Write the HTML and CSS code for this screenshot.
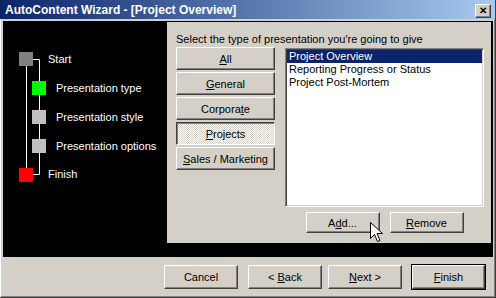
FILE: index.html
```html
<!DOCTYPE html>
<html lang="en">
<head>
  <meta charset="UTF-8" />
  <title>AutoContent Wizard - [Project Overview]</title>
  <link rel="stylesheet" href="styles.css">
</head>
<body>
  <div class="window">
    <div class="titlebar">
      <span class="title">AutoContent Wizard - [Project Overview]</span>
      <button class="close-btn">&#x2715;</button>
    </div>

    <div class="content">
      <div class="steps">
        <svg width="164" height="236" viewBox="3 21 164 236">
          <g stroke="#fff" stroke-width="1" fill="none">
            <path d="M26.5 65 V168" />
            <path d="M33 59.5 H39.5 V174.5 H33" />
          </g>
          <rect x="19" y="52" width="14" height="14" fill="#808080" />
          <rect x="32" y="81" width="14" height="14" fill="#00ff00" />
          <rect x="32" y="110" width="14" height="14" fill="#c0c0c0" />
          <rect x="32" y="139" width="14" height="14" fill="#c0c0c0" />
          <rect x="19" y="168" width="14" height="14" fill="#ff0000" />
          <g class="step-label">
            <text x="48" y="63">Start</text>
            <text x="56" y="92">Presentation type</text>
            <text x="56" y="121">Presentation style</text>
            <text x="56" y="150">Presentation options</text>
            <text x="48" y="178">Finish</text>
          </g>
        </svg>
      </div>

      <div class="main">
        <p class="prompt">Select the type of presentation you're going to give</p>
        <div class="picker">
          <div class="categories">
            <button class="btn cat-btn"><u>A</u>ll</button>
            <button class="btn cat-btn"><u>G</u>eneral</button>
            <button class="btn cat-btn">Corpora<u>t</u>e</button>
            <button class="btn cat-btn pressed"><u>P</u>rojects</button>
            <button class="btn cat-btn"><u>S</u>ales / Marketing</button>
          </div>
          <div class="list-col">
            <ul class="listbox">
              <li class="selected">Project Overview</li>
              <li>Reporting Progress or Status</li>
              <li>Project Post-Mortem</li>
            </ul>
            <div class="list-actions">
              <button class="btn small-btn">A<u>d</u>d...</button>
              <button class="btn small-btn"><u>R</u>emove</button>
            </div>
          </div>
        </div>
      </div>
    </div>

    <div class="footer">
      <button class="btn nav-btn">Cancel</button>
      <button class="btn nav-btn back-btn">&lt; <u>B</u>ack</button>
      <button class="btn nav-btn"><u>N</u>ext &gt;</button>
      <button class="btn nav-btn default"><u>F</u>inish</button>
    </div>
  </div>

  <svg class="cursor" width="13" height="21" viewBox="0 0 13 21">
    <path d="M0.5 0.5 V16.5 L4.5 12.5 L7.5 19.5 L10 18.5 L7 11.5 H12.5 Z" fill="#fff" stroke="#000" stroke-width="1" />
  </svg>
</body>
</html>
```

FILE: styles.css
```css
:root {
  --face: #d4d0c8;
  --shadow: #808080;
  --dark: #404040;
  --navy: #0a246a;
}

body {
  margin: 0;
  width: 496px;
  height: 298px;
  overflow: hidden;
  font-family: 'Liberation Sans', Arial, sans-serif;
  font-size: 11px;
  background-color: var(--face);
  position: relative;
}

.window {
  height: 298px;
  box-sizing: border-box;
  border-right: 1px solid var(--dark);
  border-bottom: 1px solid var(--dark);
  box-shadow: inset 1px 1px #fff, inset -1px -1px var(--shadow);
}

.titlebar {
  height: 19px;
  margin-bottom: 2px;
  padding: 0 4px 0 5px;
  display: flex;
  align-items: center;
  justify-content: space-between;
  background: linear-gradient(to right, var(--navy), #a6caf0);
}

.title {
  color: #fff;
  font-weight: bold;
  font-size: 12px;
  letter-spacing: 0;
}

.close-btn {
  width: 16px;
  height: 14px;
  margin-top: 3px;
  padding: 0;
  font-size: 10px;
  font-weight: bold;
  line-height: 10px;
  color: #000;
  background: var(--face);
  border: 1px solid;
  border-color: #fff var(--dark) var(--dark) #fff;
  box-shadow: inset -1px -1px var(--shadow);
}

.content {
  display: flex;
  height: 236px;
  margin: 0 2px 0 3px;
  background: #000;
}

.steps {
  width: 164px;
  flex: none;
}

.steps svg {
  display: block;
}

.step-label text {
  fill: #fff;
  font-family: 'Liberation Sans', Arial, sans-serif;
  font-size: 11px;
}

.main {
  flex: 1;
  height: 221px;
  margin: 1px 2px 0 0;
  padding: 11px 0 0 9px;
  box-sizing: border-box;
  background: var(--face);
}

.prompt {
  margin: 0 0 1px;
  line-height: 13px;
  color: #000;
}

.picker {
  display: flex;
}

.categories {
  display: flex;
  flex-direction: column;
  gap: 2px;
  width: 99px;
}

.btn {
  font-family: inherit;
  font-size: 11px;
  color: #000;
  background: var(--face);
  border: 1px solid;
  border-color: #fff var(--dark) var(--dark) #fff;
  box-shadow: inset -1px -1px var(--shadow);
  padding: 0;
  box-sizing: border-box;
}

.cat-btn {
  height: 23px;
  width: 99px;
}

.cat-btn.pressed {
  border-color: var(--dark) #fff #fff var(--dark);
  box-shadow: inset 1px 1px var(--shadow);
  background-image: conic-gradient(#fff 25%, var(--face) 0 50%, #fff 0 75%, var(--face) 0);
  background-size: 2px 2px;
  padding-top: 1px;
}

.list-col {
  margin-left: 10px;
  width: 199px;
}

.listbox {
  list-style: none;
  margin: 1px 0 0;
  padding: 1px;
  height: 159px;
  box-sizing: border-box;
  background: #fff;
  border: 1px solid;
  border-color: var(--shadow) #fff #fff var(--shadow);
  box-shadow: inset 1px 1px var(--dark), inset -1px -1px var(--face);
}

.listbox li {
  line-height: 13px;
  padding-left: 2px;
  color: #000;
}

.listbox li.selected {
  background: var(--navy);
  color: #fff;
}

.list-actions {
  display: flex;
  justify-content: center;
  gap: 10px;
  margin-top: 5px;
}

.small-btn {
  width: 74px;
  height: 21px;
}

.footer {
  display: flex;
  padding: 8px 0 0 164px;
}

.nav-btn {
  width: 74px;
  height: 24px;
  margin-right: 10px;
}

.back-btn {
  margin-right: 6px;
}

.nav-btn.default {
  outline: 1px solid #000;
  width: 73px;
  margin-right: 0;
}

.cursor {
  position: absolute;
  left: 370px;
  top: 222px;
}
```
